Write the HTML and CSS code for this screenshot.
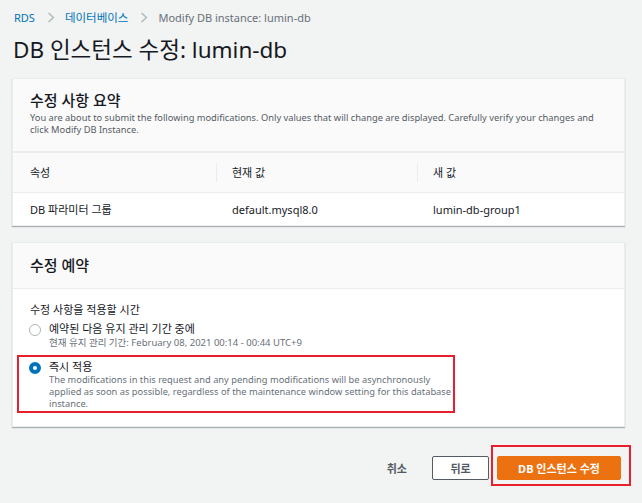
FILE: index.html
```html
<!DOCTYPE html>
<html lang="ko">
<head>
    <meta charset="UTF-8">
    <title>Modify DB instance: lumin-db</title>
    <link rel="stylesheet" href="styles.css">
</head>
<body>
    <div class="page">
        <nav class="breadcrumbs">
            <a href="#" class="crumb">RDS</a>
            <span class="chevron"><svg width="8" height="11" viewBox="0 0 8 11"><path d="M1.5 1l5 4.5-5 4.5" fill="none" stroke="#aab7b8" stroke-width="1.3"/></svg></span>
            <a href="#" class="crumb ko">데이터베이스</a>
            <span class="chevron"><svg width="8" height="11" viewBox="0 0 8 11"><path d="M1.5 1l5 4.5-5 4.5" fill="none" stroke="#aab7b8" stroke-width="1.3"/></svg></span>
            <span class="crumb current">Modify DB instance: lumin-db</span>
        </nav>

        <h1>DB 인스턴스 수정: lumin-db</h1>

        <div class="card">
            <div class="card-header">
                <h2>수정 사항 요약</h2>
                <p class="desc">You are about to submit the following modifications. Only values that will change are displayed. Carefully verify your changes and click Modify DB Instance.</p>
            </div>
            <table class="summary">
                <tr>
                    <th><span>속성</span></th>
                    <th><span>현재 값</span></th>
                    <th><span>새 값</span></th>
                </tr>
                <tr>
                    <td>DB 파라미터 그룹</td>
                    <td>default.mysql8.0</td>
                    <td>lumin-db-group1</td>
                </tr>
            </table>
        </div>

        <div class="card">
            <div class="card-header simple">
                <h2>수정 예약</h2>
            </div>
            <div class="card-body">
                <div class="field-label">수정 사항을 적용할 시간</div>
                <div class="option">
                    <span class="radio"></span>
                    <div>
                        <div class="option-title">예약된 다음 유지 관리 기간 중에</div>
                        <div class="option-sub">현재 유지 관리 기간: February 08, 2021 00:14 - 00:44 UTC+9</div>
                    </div>
                </div>
                <div class="option marked">
                    <span class="radio checked"></span>
                    <div>
                        <div class="option-title">즉시 적용</div>
                        <div class="option-desc">The modifications in this request and any pending modifications will be asynchronously applied as soon as possible, regardless of the maintenance window setting for this database instance.</div>
                    </div>
                </div>
            </div>
        </div>

        <div class="actions">
            <a href="#" class="link-button">취소</a>
            <button class="btn">뒤로</button>
            <span class="mark"><button class="btn primary">DB 인스턴스 수정</button></span>
        </div>
    </div>
</body>
</html>
```

FILE: styles.css
```css
body {
    margin: 0;
    background-color: #f2f3f3;
    font-family: "Noto Sans", "Noto Sans CJK KR", sans-serif;
    color: #16191f;
}

.page {
    padding: 6px 11px 0 12px;
}

.breadcrumbs {
    display: flex;
    align-items: center;
    font-size: 11px;
    height: 22px;
    padding-left: 2px;
}

.crumb {
    color: #0073bb;
    text-decoration: none;
}

.crumb.ko {
    font-size: 11.5px;
}

.crumb.current {
    color: #687078;
}

.chevron {
    display: inline-flex;
    margin: 0 10px 0 12px;
}

h1 {
    font-size: 22.5px;
    font-weight: 400;
    margin: 9px 0 15px 1px;
    line-height: 26px;
}

.card {
    width: 611px;
    background-color: #fff;
    border: 1px solid #eaeded;
    box-shadow: 0 1px 1px 0 rgba(0, 28, 36, 0.3);
    margin-bottom: 16px;
}

.card-header {
    background-color: #fafafa;
    padding: 11px 17px 15px;
    border-bottom: 2px solid #eaeded;
}

.card-header.simple {
    padding: 12px 17px 13px;
    border-bottom: 1px solid #eaeded;
}

h2 {
    font-size: 15px;
    font-weight: 500;
    margin: 0;
    line-height: 20px;
}

.desc {
    margin: 2px 0 0;
    font-size: 9.3px;
    line-height: 12px;
    color: #545b64;
}

.summary {
    width: 100%;
    border-collapse: collapse;
    font-size: 11px;
}

.summary th {
    background-color: #fafafa;
    font-weight: 400;
    text-align: left;
    height: 39px;
    padding: 0;
    border-bottom: 1px solid #eaeded;
}

.summary th span {
    display: block;
    padding-left: 17px;
    line-height: 19px;
}

.summary th + th span {
    border-left: 1px solid #eaeded;
    padding-left: 15px;
}

.summary th:first-child {
    width: 203px;
}

.summary th:nth-child(2) {
    width: 201px;
}

.summary td {
    height: 32px;
    padding: 0 0 0 16px;
}

.summary td:first-child {
    padding-left: 17px;
}

.card-body {
    padding: 14px 0 13px 4px;
    font-size: 11px;
}

.field-label {
    padding-left: 13px;
    line-height: 14px;
    margin-bottom: 5px;
}

.option {
    display: flex;
    align-items: flex-start;
    padding-left: 12px;
}

.option.marked {
    border: 2px solid #e8202e;
    padding: 3px 0 1px 10px;
    margin-top: 6px;
    width: 424px;
}

.radio {
    width: 10px;
    height: 10px;
    border: 1px solid #aab7b8;
    border-radius: 50%;
    margin: 2px 8px 0 0;
    flex-shrink: 0;
}

.radio.checked {
    width: 4px;
    height: 4px;
    border: 4px solid #0073bb;
}

.option-title {
    line-height: 14px;
}

.option-sub {
    font-size: 9.5px;
    line-height: 13px;
    color: #687078;
}

.option-desc {
    font-size: 9.3px;
    line-height: 12px;
    color: #687078;
}

.actions {
    display: flex;
    align-items: flex-end;
    justify-content: flex-end;
    padding-top: 2px;
}

.link-button {
    color: #545b64;
    font-size: 11px;
    font-weight: 700;
    text-decoration: none;
    margin: 0 25px 10px 0;
}

.btn {
    font-family: inherit;
    font-size: 11px;
    font-weight: 700;
    color: #545b64;
    background-color: #fff;
    border: 1px solid #545b64;
    border-radius: 2px;
    height: 24px;
    width: 57px;
    padding: 0;
    margin-bottom: 6px;
    cursor: pointer;
}

.mark {
    display: inline-flex;
    border: 2px solid #e8202e;
    padding: 9px 8px 4px 4px;
    margin-left: 2px;
}

.btn.primary {
    background-color: #ec7211;
    border-color: #ec7211;
    color: #fff;
    width: 124px;
    margin: 0;
}
```
